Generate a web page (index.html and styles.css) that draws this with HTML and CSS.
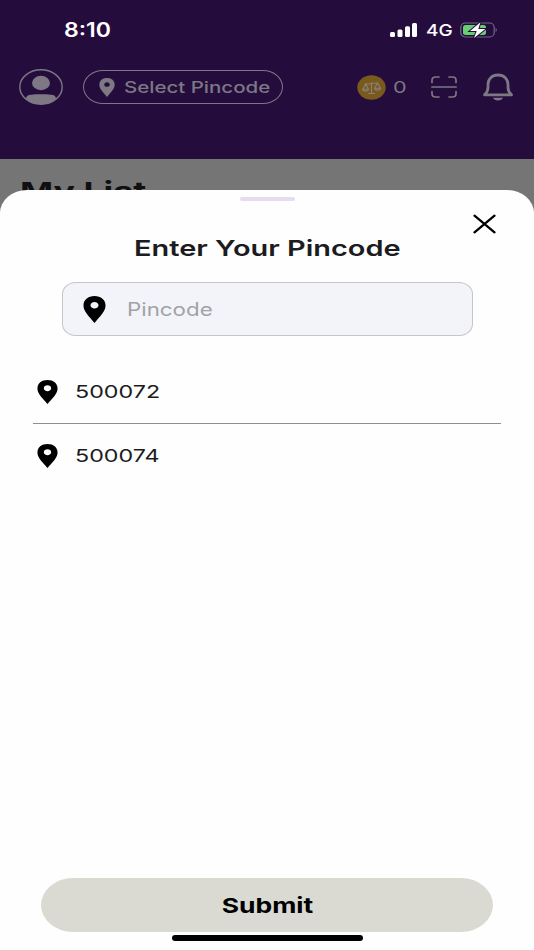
FILE: index.html
```html
<!DOCTYPE html>
<html lang="en">
<head>
    <meta charset="UTF-8">
    <meta name="viewport" content="width=device-width, initial-scale=1.0">
    <title>Select Pincode</title>
    <link rel="stylesheet" href="styles.css">
</head>
<body>

    <!-- shared pin icon -->
    <svg class="defs" width="0" height="0">
        <symbol id="pin" viewBox="0 0 24 28" preserveAspectRatio="none">
            <path fill-rule="evenodd" d="M12 0C5.300 0 .5 4 .5 9.800.5 16 6 20.500 12 28c6-7.500 11.500-12 11.500-18.200C23.500 4 18.700 0 12 0zm0 6.200c2.400 0 4.200 1.500 4.200 3.400S14.400 13 12 13s-4.200-1.500-4.200-3.400S9.600 6.200 12 6.200z"/>
        </symbol>
    </svg>

    <header class="header">
        <div class="status">
            <span class="text time">8:10</span>
            <svg class="signal" viewBox="0 0 28 14">
                <rect x="0" y="9" width="5" height="5" rx="1.500"/>
                <rect x="7.500" y="6.500" width="5" height="7.500" rx="1.500"/>
                <rect x="15" y="3.200" width="5" height="10.800" rx="1.500"/>
                <rect x="22" y="0" width="5" height="14" rx="1.500"/>
            </svg>
            <span class="text network">4G</span>
            <svg class="battery" viewBox="0 0 38 18">
                <rect x=".8" y="2" width="33.400" height="14" rx="4.500" fill="none" stroke="#75678a" stroke-width="1.200"/>
                <path d="M35.600 7c1.600.5 1.600 3.500 0 4z" fill="#75678a"/>
                <rect x="3" y="4" width="23" height="10" rx="2.500" fill="#68cf70"/>
                <path d="M20.500 1.200 10 10h6.700L14 17 25.300 7.900h-7z" fill="#fff" stroke="#240c3d" stroke-width="2" paint-order="stroke"/>
            </svg>
        </div>

        <div class="toolbar">
            <svg class="avatar" viewBox="0 0 44 36">
                <ellipse cx="22" cy="18" rx="21.200" ry="17.200" fill="none" stroke="#7d7883" stroke-width="1.400"/>
                <ellipse cx="22" cy="14" rx="9" ry="7.200"/>
                <path d="M7 29.500c0-2.500 2-3.600 5-3.800 6-.5 14-.5 20 0 3 .2 5 1.300 5 3.800-3.500 3.600-9 5.700-15 5.700s-11.500-2.100-15-5.700z"/>
            </svg>
            <div class="location">
                <svg class="location-pin"><use href="#pin"/></svg>
                <span class="text location-text">Select Pincode</span>
            </div>
            <svg class="coin" viewBox="0 0 29 25">
                <ellipse cx="14.500" cy="12.500" rx="14.200" ry="12.200" fill="#7a5a1c"/>
                <g fill="none" stroke="#88807a" stroke-width="1.100" stroke-linecap="round" stroke-linejoin="round">
                    <path d="M8 9 21 8M14.500 7.500v11M11.500 18.500h6"/>
                    <path d="M8.700 9 6 14.200M8.700 9l2.800 5.200M20.500 8.200l-3 5M20.500 8.200l3 5"/>
                    <path d="M5.500 14.200h6.200c-.6 2.600-5.600 2.600-6.200 0zM17.300 13.200h6.400c-.6 2.600-5.800 2.600-6.400 0z"/>
                </g>
            </svg>
            <span class="text coins">0</span>
            <svg class="scan" viewBox="0 0 26 22">
                <path d="M1 6.500V4.200C1 2.200 2.300 1 4.500 1H8M18 1h3.500C23.700 1 25 2.200 25 4.200v2.300M25 15.500v2.300c0 2-1.300 3.200-3.500 3.200H18M8 21H4.500C2.300 21 1 19.800 1 17.800v-2.300M.8 11h24.400" fill="none" stroke="#7d7883" stroke-width="1.700" stroke-linecap="round"/>
            </svg>
            <svg class="bell" viewBox="0 0 32 28">
                <path d="M2.500 21.800c2.400-2 3.500-4.300 3.500-7.500V11.500C6 6 9.900 2 16 2s10 4 10 9.500v2.800c0 3.200 1.100 5.500 3.500 7.500z" fill="none" stroke="#7d7883" stroke-width="2.800" stroke-linejoin="round"/>
                <path d="M11 24.800h10c-.8 1.900-2.500 2.700-5 2.700s-4.200-.8-5-2.700z"/>
            </svg>
        </div>
    </header>

    <main class="page">
        <h1 class="text list-title">My List</h1>
    </main>

    <section class="sheet">
        <div class="handle"></div>
        <button class="close" aria-label="Close">
            <svg viewBox="0 0 23 20"><path d="M1.500 1.700 21.500 18.300M21.500 1.700 1.500 18.300" stroke="#000" stroke-width="2.300" stroke-linecap="round"/></svg>
        </button>
        <h2 class="title"><span class="text title-text">Enter Your Pincode</span></h2>

        <div class="field">
            <svg class="field-pin"><use href="#pin"/></svg>
            <span class="text placeholder">Pincode</span>
        </div>

        <ul class="pincodes">
            <li>
                <svg class="row-pin"><use href="#pin"/></svg>
                <span class="text code">500072</span>
            </li>
            <li>
                <svg class="row-pin"><use href="#pin"/></svg>
                <span class="text code">500074</span>
            </li>
        </ul>

        <button class="submit"><span class="text submit-text">Submit</span></button>
        <div class="home-bar"></div>
    </section>

</body>
</html>
```
FILE: styles.css
```css
* {
    box-sizing: border-box;
}
body {
    margin: 0;
    height: 950px;
    overflow: hidden;
    position: relative;
    background: #757575;
    font-family: Inter, "Liberation Sans", sans-serif;
    color: #1c1c20;
}
.defs {
    position: absolute;
}
svg {
    display: block;
    flex: none;
}
button {
    border: none;
    padding: 0;
    font-family: inherit;
}
/* wide lettering */
.text {
    display: inline-block;
    white-space: nowrap;
    transform: scaleX(1.2);
    transform-origin: left center;
}
.header {
    height: 158.5px;
    background: #240c3d;
    fill: #7d7883;
}
.status {
    display: flex;
    align-items: center;
    height: 59px;
    padding: 0 36px 0 64px;
    color: #fff;
}
.time {
    font-size: 19.5px;
    font-weight: 600;
    margin-right: auto;
    transform: scaleX(1.18);
}
.signal {
    width: 28px;
    height: 14px;
    fill: #fff;
    margin-right: 8px;
}
.network {
    width: 34px;
    font-size: 16.5px;
    font-weight: 500;
    transform: scaleX(1.15);
}
.battery {
    width: 38px;
    height: 18px;
}
.toolbar {
    display: flex;
    align-items: center;
    height: 56px;
    padding: 0 20px 0 19px;
    color: #7d7883;
}
.avatar {
    width: 44px;
    height: 36px;
}
.location {
    display: flex;
    align-items: center;
    width: 200px;
    height: 34px;
    margin-left: 20px;
    padding-left: 15px;
    border: 1px solid #7d7883;
    border-radius: 20px / 17px;
}
.location-pin {
    width: 16px;
    height: 19px;
    margin-right: 9px;
}
.location-text {
    font-size: 16px;
    font-weight: 500;
    transform: scaleX(1.28);
}
.coin {
    width: 29px;
    height: 25px;
    margin-left: 74px;
}
.coins {
    width: 38px;
    margin-left: 7px;
    font-size: 16px;
    transform: scaleX(1.35);
}
.scan {
    width: 26px;
    height: 22px;
}
.bell {
    width: 32px;
    height: 28px;
    margin-left: auto;
}
.page {
    padding: 16px 20px;
}
.list-title {
    margin: 0;
    font-size: 26px;
    line-height: 34px;
    font-weight: 700;
    color: #101012;
    transform: scaleX(1.37);
}
.sheet {
    position: absolute;
    top: 190px;
    left: 0;
    right: 0;
    bottom: 0;
    display: flex;
    flex-direction: column;
    align-items: center;
    background: #fefefe;
    border-radius: 27px 27px 0 0 / 23px 23px 0 0;
}
.handle {
    width: 55px;
    height: 4px;
    margin-top: 7px;
    border-radius: 2px;
    background: #e5dced;
}
.close {
    align-self: flex-end;
    width: 23px;
    height: 20px;
    margin: 13px 38px 0 0;
    background: none;
}
.title {
    margin: 0;
    height: 30px;
    font-size: 22px;
    line-height: 28px;
    font-weight: 600;
}
.title-text {
    transform: scaleX(1.315);
    transform-origin: center;
}
.field {
    display: flex;
    align-items: center;
    width: 411px;
    height: 54px;
    margin-top: 18px;
    padding-left: 20px;
    border: 1.5px solid #c5c5ca;
    border-radius: 14px / 12px;
    background: #f3f4f9;
}
.field-pin {
    width: 23px;
    height: 27px;
    margin-right: 21px;
}
.placeholder {
    font-size: 18px;
    color: #a2a2a6;
    transform: scaleX(1.24);
}
.pincodes {
    list-style: none;
    width: 468px;
    margin: 24px 0 0;
    padding: 0;
}
.pincodes li {
    display: flex;
    align-items: center;
    height: 63px;
    padding-left: 4px;
}
.pincodes li:first-child {
    height: 64px;
    border-bottom: 1px solid #8f8f8f;
}
.row-pin {
    width: 21px;
    height: 24px;
    margin-right: 17px;
}
.code {
    font-size: 17.5px;
    transform: scaleX(1.33);
}
.submit {
    width: 452px;
    height: 54px;
    margin-top: auto;
    border-radius: 32px / 27px;
    background: #dadad3;
    color: #000;
}
.submit-text {
    font-size: 20.5px;
    font-weight: 700;
    transform: scaleX(1.29);
    transform-origin: center;
}
.home-bar {
    width: 191px;
    height: 6px;
    margin: 3px 0 9px;
    border-radius: 3px;
    background: #000;
}
```
